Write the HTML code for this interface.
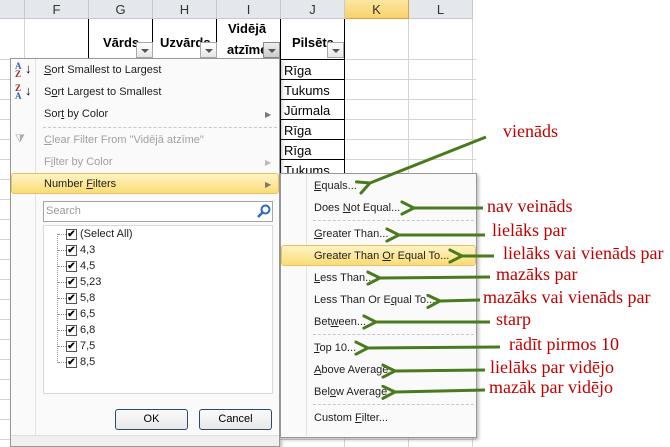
<!DOCTYPE html>
<html><head><meta charset="utf-8"><style>
*{margin:0;padding:0;box-sizing:border-box}
body{width:670px;height:447px;overflow:hidden;background:#fff;font-family:"Liberation Sans",sans-serif;position:relative}
.a{position:absolute}
.hdr{top:0;height:19px;background:#e4e7ec;border-bottom:1px solid #c6c9ce;border-right:1px solid #c6c9ce;font-size:13px;color:#333;text-align:center;line-height:19px}
.vl{width:1px;background:#d4d4d4}
.hl{height:1px;background:#d4d4d4}
.bk{background:#000}
.cell{font-size:13px;color:#000}
.h{font-weight:bold;font-size:13px}
.dd{width:17px;height:16px;border:1px solid #a8a8a8;background:linear-gradient(#fff,#e6e6e6)}
.dd:after{content:"";position:absolute;left:4px;top:6px;border:4px solid transparent;border-top:4px solid #555;border-bottom:none}
.menu{background:#fafafa;border:1px solid #979797;box-shadow:2px 2px 3px rgba(0,0,0,.25)}
.mi{font-size:11px;color:#1e1e1e;white-space:nowrap}
.dis{color:#a0a0a0}
.sep{height:0;border-top:1px dashed #c8c8c8}
.hi{background:linear-gradient(#fef3c3,#fbdc76);border:1px solid #e8c060;border-radius:3px}
.arr{color:#777;font-size:8px}
.ann{font-family:"Liberation Serif",serif;font-size:18px;color:#c00000;white-space:nowrap}
.cb{width:11px;height:11px;border:1px solid #555;background:#fff;font-size:10px;line-height:9px;text-align:center;font-weight:bold}
.btn{border:1px solid #2e4a6a;border-radius:3px;background:linear-gradient(#fafafa,#e8e8e8);font-size:11px;text-align:center;line-height:19px}
u{text-decoration:underline}
</style></head><body>
<div class="a hdr" style="left:0;width:25px"></div>
<div class="a hdr" style="left:25px;width:64px">F</div>
<div class="a hdr" style="left:89px;width:64px">G</div>
<div class="a hdr" style="left:153px;width:64px">H</div>
<div class="a hdr" style="left:217px;width:64px">I</div>
<div class="a hdr" style="left:281px;width:64px">J</div>
<div class="a hdr" style="left:345px;width:64px;background:linear-gradient(#fbe6a0,#f8d36c);border-color:#e0a040">K</div>
<div class="a hdr" style="left:409px;width:64px">L</div>
<div class="a vl" style="left:24px;top:19px;height:428px"></div>
<div class="a vl" style="left:408px;top:19px;height:428px"></div>
<div class="a vl" style="left:472px;top:19px;height:428px"></div>
<div class="a vl" style="left:344px;top:19px;height:428px"></div>
<div id="rows"></div>
<div class="a bk" style="left:88px;top:19px;width:1px;height:40px"></div>
<div class="a bk" style="left:152px;top:19px;width:1px;height:40px"></div>
<div class="a bk" style="left:216px;top:19px;width:1px;height:40px"></div>
<div class="a bk" style="left:280px;top:19px;width:1px;height:160px"></div>
<div class="a bk" style="left:344px;top:19px;width:1px;height:160px"></div>
<div class="a bk" style="left:280px;top:59px;width:65px;height:1px"></div>
<div class="a bk" style="left:280px;top:79px;width:65px;height:1px"></div>
<div class="a bk" style="left:280px;top:99px;width:65px;height:1px"></div>
<div class="a bk" style="left:280px;top:119px;width:65px;height:1px"></div>
<div class="a bk" style="left:280px;top:139px;width:65px;height:1px"></div>
<div class="a bk" style="left:280px;top:159px;width:65px;height:1px"></div>
<div class="a h" style="left:103px;top:35px">Vārds</div>
<div class="a h" style="left:160px;top:35px">Uzvārds</div>
<div class="a h" style="left:228px;top:21px">Vidējā</div>
<div class="a h" style="left:227px;top:42px">atzīme</div>
<div class="a h" style="left:292px;top:35px">Pilsēta</div>
<div class="a dd" style="left:136px;top:42px"></div>
<div class="a dd" style="left:200px;top:42px"></div>
<div class="a dd" style="left:263px;top:42px;border-color:#888;background:linear-gradient(#eee,#ccc)"></div>
<div class="a dd" style="left:327px;top:42px"></div>
<div class="a cell" style="left:284px;top:63px">Rīga</div>
<div class="a cell" style="left:284px;top:83px">Tukums</div>
<div class="a cell" style="left:284px;top:103px">Jūrmala</div>
<div class="a cell" style="left:284px;top:123px">Rīga</div>
<div class="a cell" style="left:284px;top:143px">Rīga</div>
<div class="a cell" style="left:284px;top:163px">Tukums</div>
<div class="a menu" style="left:10px;top:58px;width:270px;height:389px"></div>
<div class="a" style="left:35px;top:59px;width:1px;height:386px;background:#e2e2e2"></div>
<div class="a" style="left:15px;top:62px;font-size:9px;font-weight:bold;line-height:8px;font-family:'Liberation Serif',serif"><span style="color:#3060b0">A</span><br><span style="color:#a02020">Z</span></div>
<div class="a" style="left:25px;top:61px;font-size:13px">↓</div>
<div class="a" style="left:15px;top:84px;font-size:9px;font-weight:bold;line-height:8px;font-family:'Liberation Serif',serif"><span style="color:#a02020">Z</span><br><span style="color:#3060b0">A</span></div>
<div class="a" style="left:25px;top:83px;font-size:13px">↓</div>
<div class="a mi" style="left:44px;top:64px"><u>S</u>ort Smallest to Largest</div>
<div class="a mi" style="left:44px;top:86px">S<u>o</u>rt Largest to Smallest</div>
<div class="a mi" style="left:44px;top:108px">Sor<u>t</u> by Color</div>
<div class="a arr" style="left:265px;top:110px">▶</div>
<div class="a sep" style="left:43px;top:127px;width:234px"></div>
<div class="a" style="left:15px;top:133px;font-size:11px;color:#aaa">⧩</div>
<div class="a mi dis" style="left:44px;top:134px"><u>C</u>lear Filter From "Vidējā atzīme"</div>
<div class="a mi dis" style="left:44px;top:156px">F<u>i</u>lter by Color</div>
<div class="a arr" style="left:265px;top:158px;color:#bbb">▶</div>
<div class="a hi" style="left:11px;top:173px;width:268px;height:21px"></div>
<div class="a mi" style="left:44px;top:178px">Number <u>F</u>ilters</div>
<div class="a arr" style="left:265px;top:180px">▶</div>
<div class="a" style="left:43px;top:201px;width:230px;height:21px;border:1px solid #a5a5a5;background:#fff"></div>
<div class="a mi" style="left:46px;top:205px;color:#999">Search</div>
<svg class="a" style="left:256px;top:203px" width="16" height="16"><circle cx="9.5" cy="6.5" r="4" fill="none" stroke="#2a6ab8" stroke-width="2"/><line x1="6.5" y1="9.5" x2="2" y2="14" stroke="#2a6ab8" stroke-width="2.5"/></svg>
<div class="a" style="left:43px;top:225px;width:230px;height:169px;border:1px solid #d8d8d8;background:#fff"></div>
<div class="a" style="left:57px;top:234px;width:1px;height:129px;border-left:1px dotted #999"></div>
<div id="list"></div>
<div class="a btn" style="left:115px;top:409px;width:73px;height:21px">OK</div>
<div class="a btn" style="left:199px;top:409px;width:73px;height:21px">Cancel</div>
<div class="a" style="left:11px;top:435px;width:268px;height:11px;background:#f0f0f0;border-top:1px solid #ddd"></div>
<div class="a menu" style="left:280px;top:173px;width:197px;height:265px"></div>
<div class="a" style="left:306px;top:174px;width:1px;height:262px;background:#e2e2e2"></div>
<div class="a mi" style="left:314px;top:180px"><u>E</u>quals...</div>
<div class="a mi" style="left:314px;top:202px">Does <u>N</u>ot Equal...</div>
<div class="a sep" style="left:313px;top:220px;width:161px"></div>
<div class="a mi" style="left:314px;top:228px"><u>G</u>reater Than...</div>
<div class="a hi" style="left:281px;top:245px;width:195px;height:21px"></div>
<div class="a mi" style="left:314px;top:250px">Greater Than <u>O</u>r Equal To...</div>
<div class="a mi" style="left:314px;top:272px"><u>L</u>ess Than...</div>
<div class="a mi" style="left:314px;top:294px">Less Than Or E<u>q</u>ual To...</div>
<div class="a mi" style="left:314px;top:316px">Bet<u>w</u>een...</div>
<div class="a sep" style="left:313px;top:334px;width:161px"></div>
<div class="a mi" style="left:314px;top:342px"><u>T</u>op 10...</div>
<div class="a mi" style="left:314px;top:364px"><u>A</u>bove Average</div>
<div class="a mi" style="left:314px;top:386px">Bel<u>o</u>w Average</div>
<div class="a sep" style="left:313px;top:404px;width:161px"></div>
<div class="a mi" style="left:314px;top:412px">Custom <u>F</u>ilter...</div>
<div class="a ann" style="left:503px;top:121px">vienāds</div>
<div class="a ann" style="left:487px;top:196px">nav veināds</div>
<div class="a ann" style="left:492px;top:220px">lielāks par</div>
<div class="a ann" style="left:503px;top:243px">lielāks vai vienāds par</div>
<div class="a ann" style="left:496px;top:264px">mazāks par</div>
<div class="a ann" style="left:483px;top:287px">mazāks vai vienāds par</div>
<div class="a ann" style="left:496px;top:309px">starp</div>
<div class="a ann" style="left:509px;top:334px">rādīt pirmos 10</div>
<div class="a ann" style="left:490px;top:357px">lielāks par vidējo</div>
<div class="a ann" style="left:489px;top:377px">mazāk par vidējo</div>
<svg class="a" style="left:0;top:0" width="670" height="447">
<defs><marker id="m" viewBox="0 0 10 10" refX="1" refY="5" markerWidth="5" markerHeight="5" orient="auto-start-reverse"><path d="M10 0.5 L1 5 L10 9.5" fill="none" stroke="#4a7a1e" stroke-width="2"/></marker></defs>
<g stroke="#4a7a1e" stroke-width="3" fill="none" marker-end="url(#m)">
<line x1="486" y1="137" x2="370" y2="183"/>
<line x1="483" y1="208" x2="414" y2="208"/>
<line x1="485" y1="235" x2="399" y2="235"/>
<line x1="494" y1="256" x2="462" y2="256"/>
<line x1="490" y1="277" x2="380" y2="278"/>
<line x1="480" y1="300" x2="440" y2="301"/>
<line x1="490" y1="322" x2="376" y2="322"/>
<line x1="500" y1="347" x2="368" y2="348"/>
<line x1="485" y1="370" x2="395" y2="371"/>
<line x1="485" y1="390" x2="395" y2="392"/>
</g></svg>
<script>
var r="";for(var y=59;y<447;y+=20)r+='<div class="a hl" style="left:0;top:'+y+'px;width:476px"></div>';
document.getElementById("rows").innerHTML=r;
var v=["(Select All)","4,3","4,5","5,23","5,8","6,5","6,8","7,5","8,5"],h="";
for(var i=0;i<v.length;i++){var y=228+i*16;
h+='<div class="a" style="left:58px;top:'+(y+6)+'px;width:8px;border-top:1px dotted #999"></div>';
h+='<div class="a cb" style="left:66px;top:'+(y+1)+'px">✔</div>';
h+='<div class="a mi" style="left:80px;top:'+y+'px;font-size:11px">'+v[i]+'</div>';}
document.getElementById("list").innerHTML=h;
</script>
</body></html>
